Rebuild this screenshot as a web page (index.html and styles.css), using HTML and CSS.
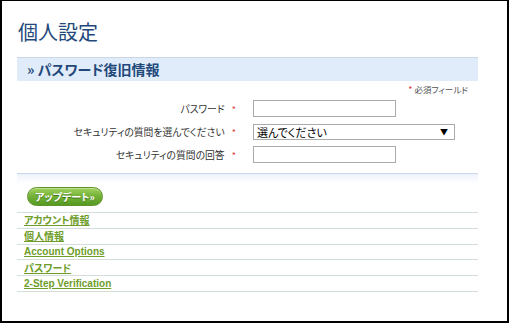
FILE: index.html
```html
<!DOCTYPE html>
<html lang="ja">
<head>
<meta charset="utf-8">
<title>個人設定</title>
<link rel="stylesheet" href="styles.css">
</head>
<body>
<div class="page">
  <h1 class="title">個人設定</h1>
  <div class="section">
    <div class="band">» パスワード復旧情報</div>
    <div class="req"><span class="ast">*</span> 必須フィールド</div>
    <form class="form">
      <label class="lbl">パスワード <span class="ast">*</span></label>
      <div class="field"><input class="txt" type="password"></div>
      <label class="lbl">セキュリティの質問を選んでください <span class="ast">*</span></label>
      <div class="field">
        <span class="selwrap">
          <select class="sel"><option>選んでください</option></select>
          <span class="arrow">▼</span>
        </span>
      </div>
      <label class="lbl">セキュリティの質問の回答 <span class="ast">*</span></label>
      <div class="field"><input class="txt" type="text"></div>
    </form>
    <div class="sep"></div>
    <button class="btn" type="button">アップデート»</button>
    <ul class="links">
      <li><a href="#">アカウント情報</a></li>
      <li><a href="#">個人情報</a></li>
      <li><a href="#" class="en">Account Options</a></li>
      <li><a href="#">パスワード</a></li>
      <li><a href="#" class="en">2-Step Verification</a></li>
    </ul>
  </div>
</div>
</body>
</html>
```
FILE: styles.css
```css
html, body {
  margin: 0;
  padding: 0;
  background: #fff;
}
body {
  font-family: "Noto Sans CJK JP", "Liberation Sans", sans-serif;
  font-feature-settings: "palt";
  color: #333;
}
.page {
  width: 509px;
  height: 323px;
  box-sizing: border-box;
  border-style: solid;
  border-color: #000;
  border-width: 1px 2px 2px 2px;
  overflow: hidden;
}
.title {
  margin: 19px 0 13px 16px;
  font-size: 20px;
  line-height: 24px;
  font-weight: normal;
  color: #23497a;
}
.section {
  margin-left: 15px;
  width: 461px;
}
.band {
  height: 23px;
  line-height: 23px;
  border-top: 1px solid #cbd7e4;
  background: #e1ecfb;
  padding-left: 10px;
  font-size: 14px;
  font-weight: bold;
  color: #23497a;
}
.req {
  margin-top: 2px;
  text-align: right;
  padding-right: 10px;
  font-size: 8.5px;
  line-height: 12px;
  color: #555;
}
.ast {
  color: #d9383a;
  font-size: 9px;
}
.form {
  margin: 1px 0 0 0;
  display: grid;
  grid-template-columns: 219px 1fr;
  grid-auto-rows: 23px;
  column-gap: 17px;
  align-items: center;
}
.lbl {
  text-align: right;
  font-size: 9.8px;
  color: #333;
  white-space: nowrap;
}
.lbl .ast {
  margin-left: 5px;
}
.field {
  display: flex;
  align-items: center;
}
.txt {
  width: 143px;
  height: 17px;
  box-sizing: border-box;
  border: 1px solid #ababab;
  margin: 0;
  padding: 0 3px;
  background: #fff;
}
.selwrap {
  position: relative;
  display: inline-block;
  height: 16px;
}
.sel {
  appearance: none;
  -webkit-appearance: none;
  display: block;
  width: 202px;
  height: 16px;
  box-sizing: border-box;
  border: 1px solid #ababab;
  margin: 0;
  padding: 0 0 0 3px;
  background: #fff;
  font-family: "Noto Sans CJK JP", sans-serif;
  font-feature-settings: "palt";
  font-size: 11px;
  line-height: 14px;
  color: #000;
}
.arrow {
  position: absolute;
  right: 7px;
  top: 2px;
  font-size: 8px;
  line-height: 12px;
  color: #000;
  pointer-events: none;
}
.sep {
  margin-top: 7px;
  height: 10px;
  border-top: 1px solid #c7d6e9;
  background: linear-gradient(#eef3fb, #fff);
}
.btn {
  display: block;
  margin: 3px 0 6px 10px;
  width: 76px;
  height: 19px;
  padding: 0;
  border: 1px solid #5d9329;
  border-radius: 10px;
  background: linear-gradient(#a2d15e 0%, #76b33a 45%, #559a22 100%);
  color: #fff;
  font-family: "Noto Sans CJK JP", sans-serif;
  font-feature-settings: "palt";
  font-size: 10px;
  font-weight: bold;
  line-height: 17px;
  text-shadow: 0 1px 0 #3f7414;
  box-shadow: inset 0 1px 0 rgba(255,255,255,0.35);
}
.links {
  list-style: none;
  margin: 0;
  padding: 0;
  border-top: 1px solid #d3ddda;
}
.links li {
  height: 14.8px;
  display: flex;
  align-items: center;
  border-bottom: 1px solid #d3ddda;
  padding-left: 7px;
}
.links a {
  color: #6e9d2a;
  font-size: 10px;
  line-height: 12px;
  font-weight: bold;
  text-decoration: underline;
}
.links a.en {
  font-family: "Liberation Sans", sans-serif;
  font-size: 10px;
}
```
